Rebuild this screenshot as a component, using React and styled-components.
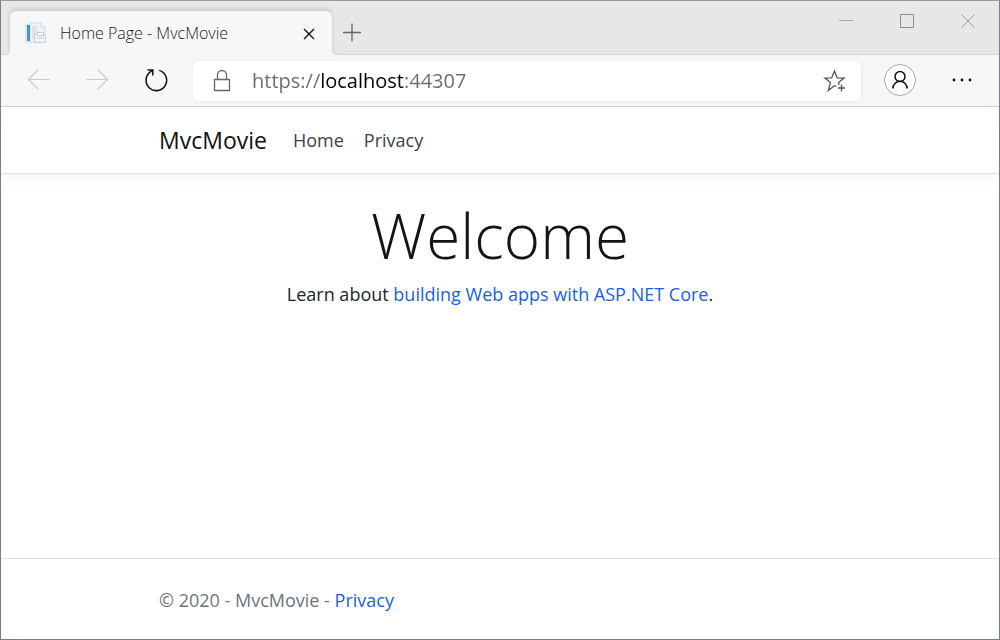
import React from "react";
import styled, { createGlobalStyle } from "styled-components";

const GlobalStyle = createGlobalStyle`
  * { box-sizing: border-box; }
  body {
    margin: 0;
    background: #fff;
    color: #212529;
    font-family: "Open Sans", "Noto Sans", sans-serif;
    font-size: 18px;
    line-height: 28px;
  }
`;

const Window = styled.div`
  display: flex;
  flex-direction: column;
  min-height: 100vh;
  border: 1px solid #74818f;
  border-top-color: #9b9b9b;
`;

const TabStrip = styled.header`
  display: flex;
  height: 54px;
  background: linear-gradient(#e7e7e7 44px, #f7f7f7 44px);
`;

const StripStart = styled.div`
  width: 9px;
  background: #e7e7e7;
  border-bottom: 1px solid #d4d4d4;
  border-bottom-right-radius: 5px;
`;

const StripRest = styled.div`
  flex: 1;
  display: flex;
  justify-content: space-between;
  background: #e7e7e7;
  border-bottom: 1px solid #d4d4d4;
  border-bottom-left-radius: 5px;
`;

const Tab = styled.div`
  position: relative;
  display: flex;
  align-items: center;
  width: 322px;
  margin-top: 10px;
  padding: 0 14px 0 15px;
  background: #f7f7f7;
  border-radius: 6px 6px 0 0;
  box-shadow: 0 -2px 4px rgba(0, 0, 0, 0.14);
  color: #222;
  font-size: 16px;
  font-weight: 300;
`;

const TabTitle = styled.span`
  flex: 1;
  margin-left: 13px;
  white-space: nowrap;
`;

const IconButton = styled.button`
  display: flex;
  align-items: center;
  justify-content: center;
  flex: none;
  width: ${(p) => p.$width || 32}px;
  height: ${(p) => p.$height || 32}px;
  padding: 0;
  border: 0;
  background: none;
  color: ${(p) => p.$color || "#111"};
`;

const NewTab = styled(IconButton)`
  margin: 16px 0 0 4px;
`;

const WindowControls = styled.div`
  display: flex;
  padding: 4px 1px 0 0;
`;

const Toolbar = styled.div`
  display: flex;
  align-items: center;
  height: 52px;
  padding: 0 6px 2px 0;
  background: #f7f7f7;
  border-bottom: 1px solid #d0d0d0;
`;

const AddressBar = styled.div`
  flex: 1;
  display: flex;
  align-items: center;
  min-width: 0;
  height: 40px;
  margin: 2px 8px 0 0;
  padding: 0 10px 0 19px;
  background: #fff;
  border-radius: 6px;
  box-shadow: 0 0 4px rgba(0, 0, 0, 0.07);
`;

const AddressInput = styled.input`
  flex: 1;
  min-width: 0;
  height: 32px;
  margin-left: 20px;
  padding: 0;
  border: 0;
  outline: 0;
  font-family: inherit;
  font-size: 20px;
  background: linear-gradient(90deg, #6b6b6b 68px, #000 68px, #000 152px, #6b6b6b 152px);
  background-clip: text;
  -webkit-background-clip: text;
  -webkit-text-fill-color: transparent;
`;

const Avatar = styled(IconButton)`
  margin: 0 15px;
  border: 1px solid #aaa;
  border-radius: 50%;
  background: #fff;
`;

const Container = styled.div`
  width: 100%;
  max-width: 682px;
  margin: 0 auto;
`;

const SiteNav = styled.nav`
  background: #fff;
  border-bottom: 1px solid #dee2e6;
  box-shadow: 0 4px 12px rgba(0, 0, 0, 0.05);
`;

const NavRow = styled(Container)`
  display: flex;
  align-items: center;
  height: 66px;
`;

const Brand = styled.a`
  margin-right: 26px;
  color: #111;
  font-size: 23px;
  text-decoration: none;
`;

const NavLink = styled.a`
  margin-right: 20px;
  color: #3c4248;
  text-decoration: none;
`;

const Main = styled.main`
  flex: 1;
  padding: 23px 0;
  text-align: center;
`;

const Heading = styled.h1`
  margin: 0 0 7px;
  color: #111418;
  font-size: 62px;
  font-weight: 300;
  line-height: 76px;
`;

const Lead = styled.p`
  margin: 0;
`;

const Link = styled.a`
  color: #1a62dc;
  text-decoration: none;
`;

const Footer = styled.footer`
  padding: 27px 0 25px;
  border-top: 1px solid #dee2e6;
  color: #6c757d;
`;

const Icon = ({ size = 24, children, ...rest }) => (
  <svg width={size} height={size} viewBox={`0 0 ${size} ${size}`} fill="none" stroke="currentColor" aria-hidden="true" {...rest}>
    {children}
  </svg>
);

const PageIcon = () => (
  <Icon size={22} stroke="none">
    <path d="M5 1h11l4 4v15H5z" fill="#f1f3f5" stroke="#d5d8db" />
    <path d="M16 1v4h4" fill="#fff" stroke="#d0d3d6" />
    <path d="M0 2h6v19H0z" fill="#d8e7f3" />
    <path d="M2 3h3v16H2z" fill="#4596cf" />
    <path d="M7 4h5v13H7z" fill="#dce4ea" />
    <path d="M9.500 12.500h11v8h-11z" fill="#eff2f5" stroke="#c8ced5" />
    <path d="M12.500 10.500h6v3h-6zM12 16h7" fill="#fff" stroke="#c8ced5" />
  </Icon>
);

export default function App() {
  return (
    <>
      <GlobalStyle />
      <Window>
        <TabStrip>
          <StripStart />
          <Tab>
            <PageIcon />
            <TabTitle>Home Page - MvcMovie</TabTitle>
            <IconButton aria-label="Close tab" $width={18}>
              <Icon size={18} strokeWidth="1.4"><path d="M4 5l10 10M14 5L4 15" /></Icon>
            </IconButton>
          </Tab>
          <StripRest>
            <NewTab aria-label="New tab" $color="#666">
              <Icon size={20}><path d="M1 9.500h18M10 .5v18" strokeWidth="1.3" /></Icon>
            </NewTab>
            <WindowControls>
              <IconButton aria-label="Minimize" $width={61} $color="#aaa">
                <Icon size={16}><path d="M1 7.500h14" /></Icon>
              </IconButton>
              <IconButton aria-label="Maximize" $width={61} $color="#8c8c8c">
                <Icon size={16}><path d="M1.500 1.500h13v13h-13z" /></Icon>
              </IconButton>
              <IconButton aria-label="Close window" $width={61} $color="#999">
                <Icon size={16}><path d="M1.500 1.500l13 13M14.500 1.500l-13 13" /></Icon>
              </IconButton>
            </WindowControls>
          </StripRest>
        </TabStrip>

        <Toolbar>
          <IconButton aria-label="Back" $width={75} $color="#c9c9c9">
            <Icon><path d="M22.500 11.500H1.500M11 2l-9.500 9.500 9.500 9.500" strokeWidth="1.2" /></Icon>
          </IconButton>
          <IconButton aria-label="Forward" $width={42} $color="#c9c9c9">
            <Icon><path d="M1.500 11.500h21M13 2l9.500 9.500-9.500 9.500" strokeWidth="1.2" /></Icon>
          </IconButton>
          <IconButton aria-label="Refresh" $width={75}>
            <Icon strokeWidth="1.500">
              <path d="M15.200 2.400A10.300 10.300 0 1 1 6 4.200L8.600 2.200" />
              <path d="M3.500 2h5.300v5.500" />
            </Icon>
          </IconButton>
          <AddressBar>
            <Icon color="#666" width="20" height="24" viewBox="0 0 20 24">
              <path d="M2.500 10.500h15v11h-15zM5.500 10.500V6a4.500 4.500 0 0 1 9 0v4.500" strokeWidth="1.3" />
            </Icon>
            <AddressInput aria-label="Address" defaultValue="https://localhost:44307" />
            <IconButton aria-label="Add to favorites" $color="#555">
              <Icon strokeWidth="1.300">
                <path d="M13.500 17.500L11.500 16.700 5.300 21.500l2.200-8L1.800 9l6.900-.2L11.500 2l2.600 6.800 7 .2-5.600 4.500.6 2.500" />
                <path d="M18.500 15.500v7M15 19h7" />
              </Icon>
            </IconButton>
          </AddressBar>
          <Avatar aria-label="Profile">
            <Icon strokeWidth="1.500">
              <circle cx="12" cy="8.500" r="5" />
              <path d="M4.800 20.500a7.200 7.200 0 0 1 14.400 0" />
            </Icon>
          </Avatar>
          <IconButton aria-label="Settings and more" $width={62}>
            <Icon stroke="none" fill="currentColor">
              <circle cx="4" cy="12" r="1.400" /><circle cx="12" cy="12" r="1.400" /><circle cx="20" cy="12" r="1.400" />
            </Icon>
          </IconButton>
        </Toolbar>

        <SiteNav>
          <NavRow>
            <Brand href="#">MvcMovie</Brand>
            <NavLink href="#home">Home</NavLink>
            <NavLink href="#privacy">Privacy</NavLink>
          </NavRow>
        </SiteNav>

        <Main>
          <Container>
            <Heading>Welcome</Heading>
            <Lead>
              Learn about <Link href="#learn">building Web apps with ASP.NET Core</Link>.
            </Lead>
          </Container>
        </Main>

        <Footer>
          <Container>
            © 2020 - MvcMovie - <Link href="#privacy">Privacy</Link>
          </Container>
        </Footer>
      </Window>
    </>
  );
}
